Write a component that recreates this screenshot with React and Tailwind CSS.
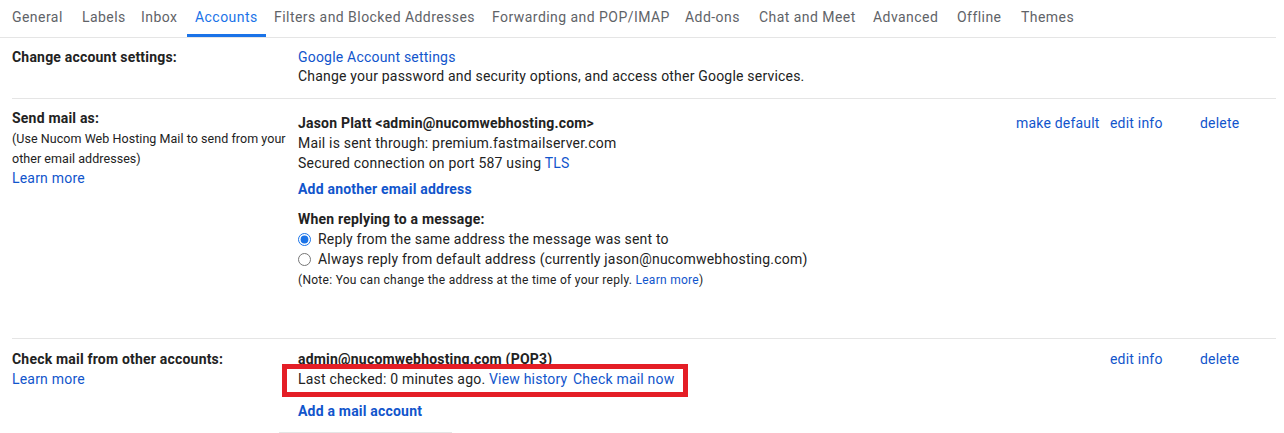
const TABS = ['General', 'Labels', 'Inbox', 'Accounts', 'Filters and Blocked Addresses', 'Forwarding and POP/IMAP', 'Add-ons', 'Chat and Meet', 'Advanced', 'Offline', 'Themes'];

// tab widths read off the screenshot
const TAB_W = {
  General: 'w-[70px]',
  Labels: 'w-[59px]',
  Inbox: 'w-[54px]',
  Accounts: 'w-[79px]',
  'Filters and Blocked Addresses': 'w-[218px]',
  'Forwarding and POP/IMAP': 'w-[193px]',
  'Add-ons': 'w-[74px]',
  'Chat and Meet': 'w-[114px]',
  Advanced: 'w-[84px]',
  Offline: 'w-[64px]',
  Themes: 'w-[64px]',
};

const link = 'text-[#1155cc] cursor-pointer';

function Tabs({ active }) {
  return (
    <div className="flex h-[38px] border-b border-[#e5e5e5] mr-[8px] pl-[4px]">
      {TABS.map((t) => (
        <div
          key={t}
          className={
            TAB_W[t] +
            ' shrink-0 h-[37px] flex items-center pl-[8px] whitespace-nowrap text-[14px] tracking-[0.45px] ' +
            (t === active ? 'text-[#1a73e8] border-b-[3px] border-[#1a73e8] pt-[1px]' : 'text-[#5f6368] pb-[2px]')
          }
        >
          {t}
        </div>
      ))}
    </div>
  );
}

function Actions({ makeDefault }) {
  return (
    <div className="w-[260px] flex shrink-0">
      <div className="w-[94px]">{makeDefault && <span className={link}>make default</span>}</div>
      <div className="w-[90px]"><span className={link}>edit info</span></div>
      <div className="flex-1"><span className={link}>delete</span></div>
    </div>
  );
}

function Radio({ checked, children }) {
  return (
    <label className="flex items-center h-[20px]">
      <input type="radio" name="reply" defaultChecked={checked} className="m-0 w-[13px] h-[13px] accent-[#1a73e8]" />
      <span className="ml-[7px]">{children}</span>
    </label>
  );
}

export default function App() {
  return (
    <div className="w-[1284px] h-[433px] overflow-hidden bg-white text-[#222] text-[14px] tracking-[0.2px] font-['Roboto','Liberation_Sans',sans-serif]">
      <Tabs active="Accounts" />

      <div className="ml-[12px] mr-[8px]">
        {/* change account settings */}
        <div className="flex border-b border-[#e5e5e5] leading-[19px] pt-[10px] pb-[12px]">
          <div className="w-[286px] shrink-0 font-bold">Change account settings:</div>
          <div className="flex-1">
            <div className={link}>Google Account settings</div>
            <div>Change your password and security options, and access other Google services.</div>
          </div>
        </div>

        {/* send mail as */}
        <div className="flex border-b border-[#e5e5e5] leading-[20px]">
          <div className="w-[286px] shrink-0 pt-[9px]">
            <div className="font-bold">Send mail as:</div>
            <div className="text-[12.5px] tracking-[0.05px] leading-[20px] mt-[1px]">
              (Use Nucom Web Hosting Mail to send from your other email addresses)
            </div>
            <div className={'-mt-[1px] ' + link}>Learn more</div>
          </div>
          <div className="flex-1 pt-[14px] pb-[48px]">
            <div className="font-bold">Jason Platt &lt;admin@nucomwebhosting.com&gt;</div>
            <div>Mail is sent through: premium.fastmailserver.com</div>
            <div>
              Secured connection on port 587 using <span className={link}>TLS</span>
            </div>
            <div className={'font-bold mt-[6px] ' + link}>Add another email address</div>
            <div className="font-bold mt-[10px]">When replying to a message:</div>
            <div>
              <Radio checked>Reply from the same address the message was sent to</Radio>
              <Radio>Always reply from default address (currently jason@nucomwebhosting.com)</Radio>
            </div>
            <div className="text-[12px] tracking-[0.28px] mt-[1px]">
              (Note: You can change the address at the time of your reply. <span className={link}>Learn more</span>)
            </div>
          </div>
          <div className="pt-[14px]">
            <Actions makeDefault />
          </div>
        </div>

        {/* check mail from other accounts */}
        <div className="flex leading-[20px] pt-[10px]">
          <div className="w-[286px] shrink-0">
            <div className="font-bold">Check mail from other accounts:</div>
            <div className={link}>Learn more</div>
          </div>
          <div className="flex-1">
            <div className="font-bold">admin@nucomwebhosting.com (POP3)</div>
            <div className="relative inline-block">
              Last checked: 0 minutes ago. <span className={link}>View history</span>{' '}
              <span className={'ml-[2px] ' + link}>Check mail now</span>
              <span className="absolute -left-[16px] -right-[14px] -top-[5px] -bottom-[8px] border-[5px] border-[#e41e26] pointer-events-none" />
            </div>
            <div className={'font-bold mt-[12px] ' + link}>Add a mail account</div>
            <div className="mt-[11px] -ml-[19px] w-[173px] border-t border-[#e5e5e5]" />
          </div>
          <Actions />
        </div>
      </div>
    </div>
  );
}
